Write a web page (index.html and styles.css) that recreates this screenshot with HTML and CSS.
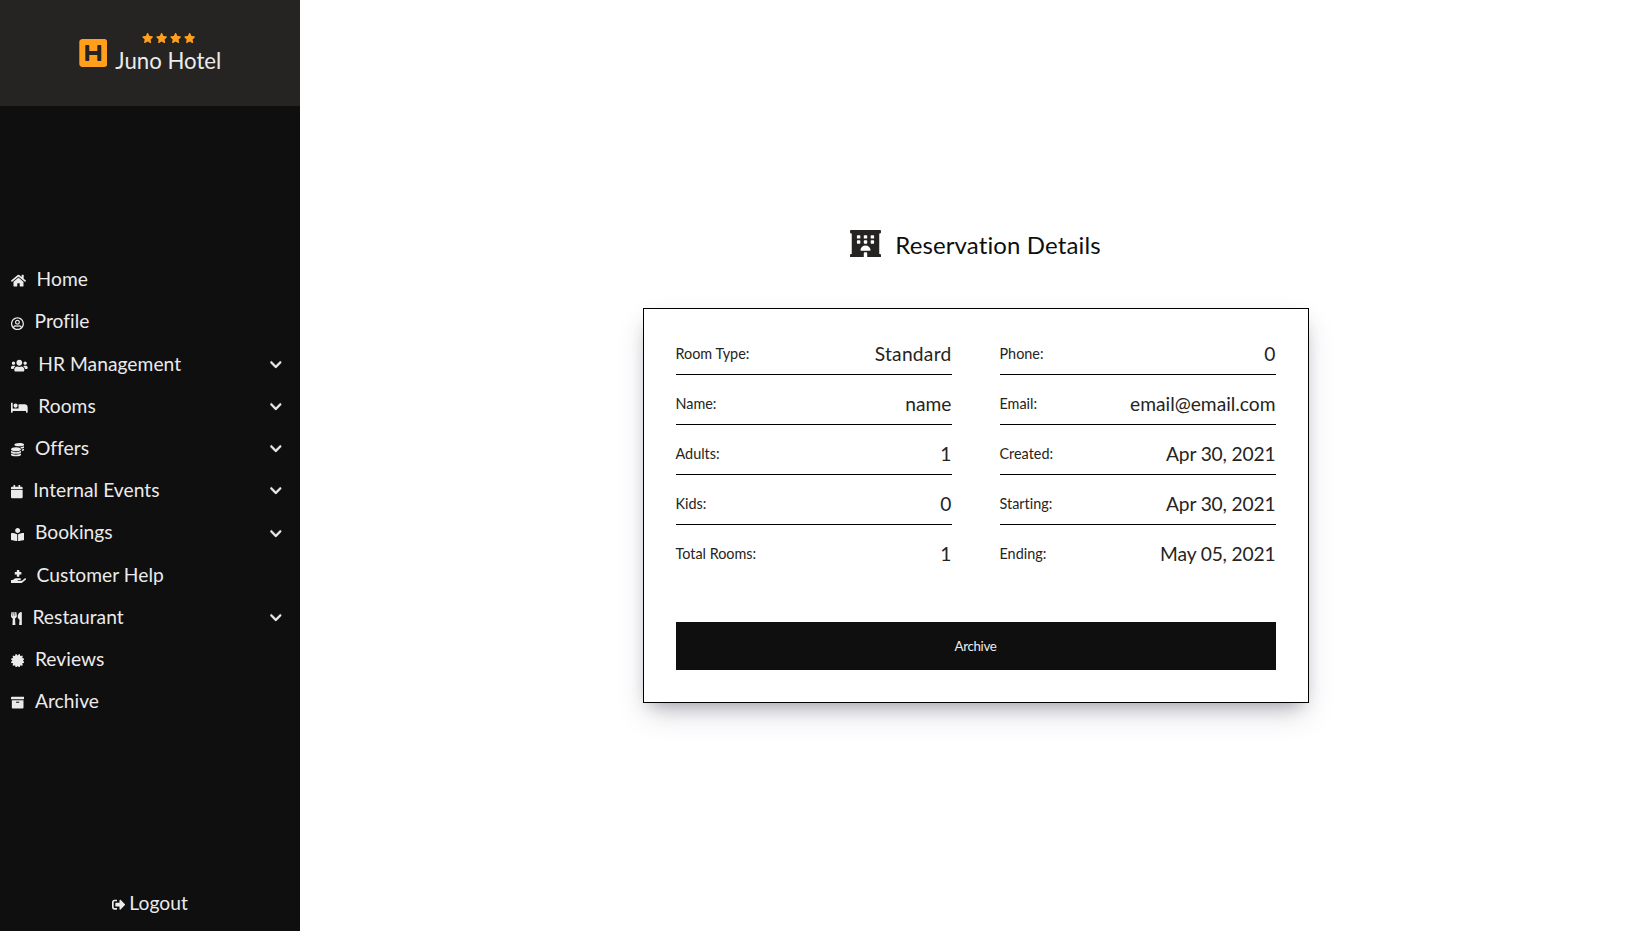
FILE: index.html
```html
<!DOCTYPE html>
<html lang="en">
<head>
<meta charset="utf-8">
<title>Juno Hotel</title>
<link rel="stylesheet" href="styles.css">
</head>
<body>
<svg class="sprite" aria-hidden="true">
  <symbol id="chevron" viewBox="0 0 448 512"><path d="M207.029 381.476L12.686 187.132c-9.373-9.373-9.373-24.569 0-33.941l22.667-22.667c9.357-9.357 24.522-9.375 33.901-.04L224 284.505l154.745-154.021c9.379-9.335 24.544-9.317 33.901.04l22.667 22.667c9.373 9.373 9.373 24.569 0 33.941L240.971 381.476c-9.373 9.372-24.569 9.372-33.942 0z"/></symbol>
  <symbol id="star" viewBox="0 0 576 512"><path d="M259.3 17.8L194 150.2 47.9 171.5c-26.2 3.8-36.7 36.1-17.7 54.6l105.7 103-25 145.5c-4.5 26.3 23.2 46 46.4 33.7L288 439.6l130.7 68.7c23.2 12.2 50.9-7.4 46.4-33.7l-25-145.5 105.7-103c19-18.5 8.5-50.8-17.7-54.6L382 150.2 316.7 17.8c-11.7-23.6-45.6-23.9-57.4 0z"/></symbol>
</svg>
<div class="layout">
  <aside class="sidebar">
    <header class="brand">
      <svg class="brand-mark" viewBox="0 0 448 512"><path d="M448 80v352c0 26.51-21.49 48-48 48H48c-26.51 0-48-21.49-48-48V80c0-26.51 21.49-48 48-48h352c26.51 0 48 21.49 48 48zm-112 48h-32c-8.837 0-16 7.163-16 16v80H160v-80c0-8.837-7.163-16-16-16h-32c-8.837 0-16 7.163-16 16v224c0 8.837 7.163 16 16 16h32c8.837 0 16-7.163 16-16v-80h128v80c0 8.837 7.163 16 16 16h32c8.837 0 16-7.163 16-16V144c0-8.837-7.163-16-16-16z"/></svg>
      <div class="brand-text">
        <div class="stars"><svg><use href="#star"/></svg><svg><use href="#star"/></svg><svg><use href="#star"/></svg><svg><use href="#star"/></svg></div>
        <div class="brand-name">Juno Hotel</div>
      </div>
    </header>
    <ul class="menu">
      <li><svg class="icon" viewBox="0 0 576 512"><path d="M280.37 148.26L96 300.11V464a16 16 0 0 0 16 16l112.06-.29a16 16 0 0 0 15.92-16V368a16 16 0 0 1 16-16h64a16 16 0 0 1 16 16v95.64a16 16 0 0 0 16 16.05L464 480a16 16 0 0 0 16-16V300L295.67 148.26a12.19 12.19 0 0 0-15.3 0zM571.6 251.47L488 182.56V44.05a12 12 0 0 0-12-12h-56a12 12 0 0 0-12 12v72.61L318.47 43a48 48 0 0 0-61 0L4.34 251.47a12 12 0 0 0-1.6 16.9l25.5 31A12 12 0 0 0 45.15 301l235.22-193.74a12.19 12.19 0 0 1 15.3 0L530.9 301a12 12 0 0 0 16.9-1.6l25.5-31a12 12 0 0 0-1.7-16.93z"/></svg><span>Home</span></li>
      <li><svg class="icon" viewBox="0 0 496 512"><path d="M248 104c-53 0-96 43-96 96s43 96 96 96 96-43 96-96-43-96-96-96zm0 144c-26.5 0-48-21.5-48-48s21.5-48 48-48 48 21.5 48 48-21.5 48-48 48zm0-240C111 8 0 119 0 256s111 248 248 248 248-111 248-248S385 8 248 8zm0 448c-49.7 0-95.1-18.3-130.1-48.4 14.9-23 40.4-38.6 69.6-39.5 20.8 6.4 40.6 9.6 60.5 9.6s39.7-3.1 60.5-9.6c29.2 1 54.7 16.5 69.6 39.5-35 30.1-80.4 48.4-130.1 48.4zm162.7-84.1c-24.4-31.4-62.1-51.9-105.1-51.9-10.2 0-26 9.6-57.6 9.6-31.5 0-47.4-9.6-57.6-9.6-42.9 0-80.6 20.5-105.1 51.9C61.9 339.2 48 299.2 48 256c0-110.3 89.7-200 200-200s200 89.7 200 200c0 43.2-13.9 83.2-37.3 115.9z"/></svg><span>Profile</span></li>
      <li><svg class="icon" viewBox="0 0 640 512"><path d="M96 224c35.3 0 64-28.7 64-64s-28.7-64-64-64-64 28.7-64 64 28.7 64 64 64zm448 0c35.3 0 64-28.7 64-64s-28.7-64-64-64-64 28.7-64 64 28.7 64 64 64zm32 32h-64c-17.6 0-33.5 7.1-45.1 18.6 40.3 22.1 68.9 62 75.1 109.4h66c17.7 0 32-14.3 32-32v-32c0-35.3-28.7-64-64-64zm-256 0c61.9 0 112-50.1 112-112S381.9 32 320 32 208 82.1 208 144s50.1 112 112 112zm76.8 32h-8.3c-20.8 10-43.9 16-68.5 16s-47.6-6-68.5-16h-8.3C179.6 288 128 339.6 128 403.2V432c0 26.5 21.5 48 48 48h288c26.5 0 48-21.5 48-48v-28.8c0-63.6-51.6-115.2-115.2-115.2zm-223.7-13.4C161.5 263.1 145.6 256 128 256H64c-35.3 0-64 28.7-64 64v32c0 17.7 14.3 32 32 32h65.9c6.3-47.4 34.9-87.3 75.2-109.4z"/></svg><span>HR Management</span><svg class="chevron"><use href="#chevron"/></svg></li>
      <li><svg class="icon" viewBox="0 0 640 512"><path d="M176 256c44.11 0 80-35.89 80-80s-35.89-80-80-80-80 35.89-80 80 35.89 80 80 80zm352-128H304c-8.84 0-16 7.16-16 16v144H64V80c0-8.84-7.16-16-16-16H16C7.16 64 0 71.16 0 80v352c0 8.84 7.16 16 16 16h32c8.84 0 16-7.16 16-16v-48h512v48c0 8.84 7.16 16 16 16h32c8.84 0 16-7.16 16-16V240c0-61.86-50.14-112-112-112z"/></svg><span>Rooms</span><svg class="chevron"><use href="#chevron"/></svg></li>
      <li><svg class="icon" viewBox="0 0 512 512"><path d="M0 405.3V448c0 35.3 86 64 192 64s192-28.7 192-64v-42.7C342.7 434.4 267.2 448 192 448S41.3 434.4 0 405.3zM320 128c106 0 192-28.7 192-64S426 0 320 0 128 28.7 128 64s86 64 192 64zM0 300.4V352c0 35.3 86 64 192 64s192-28.7 192-64v-51.6c-41.3 34-116.9 51.6-192 51.6S41.3 334.4 0 300.4zm416 11c57.3-11.1 96-31.7 96-55.4v-42.7c-23.2 16.4-57.3 27.6-96 34.5v63.6zM192 160C86 160 0 195.8 0 240s86 80 192 80 192-35.8 192-80-86-80-192-80zm219.3 56.3c60-10.8 100.7-32 100.7-56.3v-42.7c-35.5 25.1-96.5 38.6-160.7 41.8 29.5 14.3 51.2 33.5 60 57.2z"/></svg><span>Offers</span><svg class="chevron"><use href="#chevron"/></svg></li>
      <li><svg class="icon" viewBox="0 0 448 512"><path d="M12 192h424c6.6 0 12 5.4 12 12v260c0 26.5-21.5 48-48 48H48c-26.5 0-48-21.5-48-48V204c0-6.6 5.4-12 12-12zm436-44v-36c0-26.5-21.5-48-48-48h-48V12c0-6.6-5.4-12-12-12h-40c-6.6 0-12 5.4-12 12v52H160V12c0-6.6-5.4-12-12-12h-40c-6.6 0-12 5.4-12 12v52H48C21.5 64 0 85.5 0 112v36c0 6.6 5.4 12 12 12h424c6.6 0 12-5.4 12-12z"/></svg><span>Internal Events</span><svg class="chevron"><use href="#chevron"/></svg></li>
      <li><svg class="icon" viewBox="0 0 512 512"><path d="M352 96c0-53.02-42.98-96-96-96s-96 42.98-96 96 42.98 96 96 96 96-42.98 96-96zM233.59 241.1c-59.33-36.32-155.43-46.3-203.79-49.05C13.55 191.13 0 203.51 0 219.14v222.8c0 14.33 11.59 26.28 26.49 27.05 43.66 2.29 131.99 10.68 193.04 41.43 9.37 4.72 20.48-1.71 20.48-11.87V252.56c-.01-4.67-2.32-8.95-6.42-11.46zm248.61-49.05c-48.35 2.74-144.46 12.73-203.78 49.05-4.1 2.51-6.41 6.96-6.41 11.63v245.79c0 10.19 11.14 16.63 20.54 11.9 61.04-30.72 149.32-39.11 192.97-41.4 14.9-.78 26.49-12.73 26.49-27.06V219.14c-.01-15.63-13.56-28.01-29.81-27.09z"/></svg><span>Bookings</span><svg class="chevron"><use href="#chevron"/></svg></li>
      <li><svg class="icon" viewBox="0 0 576 512"><path d="M160 176h64v64a16 16 0 0 0 16 16h64a16 16 0 0 0 16-16v-64h64a16 16 0 0 0 16-16V96a16 16 0 0 0-16-16h-64V16a16 16 0 0 0-16-16h-64a16 16 0 0 0-16 16v64h-64a16 16 0 0 0-16 16v64a16 16 0 0 0 16 16zM565.3 328.1c-11.8-10.7-30.2-10-42.6 0L430.3 402c-11.3 9.1-25.4 14-40 14H272c-8.8 0-16-7.2-16-16s7.2-16 16-16h78.3c15.9 0 30.7-10.9 33.3-26.6 3.3-20-12.1-37.4-31.6-37.4H192c-27 0-53.1 9.3-74.1 26.3L71.4 384H16c-8.8 0-16 7.2-16 16v96c0 8.8 7.2 16 16 16h356.8c14.5 0 28.6-4.9 40-14L564 377c15.2-12.1 16.4-35.3 1.3-48.9z"/></svg><span>Customer Help</span></li>
      <li><svg class="icon" viewBox="0 0 416 512"><path d="M207.9 15.2c.8 4.7 16.1 94.5 16.1 128.8 0 52.3-27.8 89.6-68.9 104.6L168 486.7c.7 13.7-10.2 25.3-24 25.3H80c-13.7 0-24.7-11.5-24-25.3l12.9-238.1C27.7 233.6 0 196.2 0 144 0 109.6 15.3 19.9 16.1 15.2 19.3-5.1 61.4-5.4 64 16.3v141.2c1.3 3.4 15.1 3.2 16 0 1.4-25.3 7.9-139.2 8-141.8 3.3-20.8 44.7-20.8 47.9 0 .2 2.7 6.6 116.5 8 141.8.9 3.2 14.8 3.4 16 0V16.3c2.6-21.6 44.8-21.4 48-1.1zm119.2 285.7l-15 185.1c-1.2 14 9.9 26 23.9 26h56c13.3 0 24-10.7 24-24V24c0-13.2-10.7-24-24-24-82.5 0-221.4 178.5-64.9 300.9z"/></svg><span>Restaurant</span><svg class="chevron"><use href="#chevron"/></svg></li>
      <li><svg class="icon" viewBox="0 0 512 512"><path d="M458.622 255.92l45.985-45.005c13.708-12.977 7.316-36.039-10.664-40.339l-62.65-15.99 17.661-62.015c4.991-17.838-11.829-34.663-29.661-29.671l-61.994 17.667-15.984-62.671C337.085.197 313.765-6.276 300.99 7.228L256 53.57 211.011 7.229c-12.63-13.351-36.047-7.234-40.325 10.668l-15.984 62.671-61.995-17.667C74.87 57.907 58.056 74.738 63.046 92.572l17.661 62.015-62.65 15.99C.069 174.878-6.31 197.944 7.392 210.915l45.985 45.005-45.985 45.004c-13.708 12.977-7.316 36.039 10.664 40.339l62.65 15.99-17.661 62.015c-4.991 17.838 11.829 34.663 29.661 29.671l61.994-17.667 15.984 62.671c4.439 18.575 27.696 24.018 40.325 10.668L256 458.61l44.989 46.001c12.5 13.488 35.987 7.486 40.325-10.668l15.984-62.671 61.994 17.667c17.836 4.994 34.651-11.837 29.661-29.671l-17.661-62.015 62.65-15.99c17.987-4.302 24.366-27.367 10.664-40.339l-45.984-45.004z"/></svg><span>Reviews</span></li>
      <li><svg class="icon" viewBox="0 0 512 512"><path d="M32 448c0 17.7 14.3 32 32 32h384c17.7 0 32-14.3 32-32V160H32v288zm160-212c0-6.6 5.4-12 12-12h104c6.6 0 12 5.4 12 12v8c0 6.6-5.4 12-12 12H204c-6.6 0-12-5.4-12-12v-8zM480 32H32C14.3 32 0 46.3 0 64v48c0 8.8 7.2 16 16 16h480c8.8 0 16-7.2 16-16V64c0-17.7-14.3-32-32-32z"/></svg><span>Archive</span></li>
    </ul>
    <div class="logout"><svg class="icon" viewBox="0 0 512 512"><path d="M497 273L329 441c-15 15-41 4.5-41-17v-96H152c-13.3 0-24-10.7-24-24v-96c0-13.3 10.7-24 24-24h136V88c0-21.4 25.9-32 41-17l168 168c9.3 9.4 9.3 24.6 0 34zM192 436v-40c0-6.6-5.4-12-12-12H96c-17.7 0-32-14.3-32-32V160c0-17.7 14.3-32 32-32h84c6.6 0 12-5.4 12-12V76c0-6.6-5.4-12-12-12H96c-53 0-96 43-96 96v192c0 53 43 96 96 96h84c6.6 0 12-5.4 12-12z"/></svg><span>Logout</span></div>
  </aside>
  <main class="content">
    <h1 class="title">
      <svg class="title-icon" viewBox="0 0 576 512"><path fill-rule="evenodd" d="M560 64c8.84 0 16-7.16 16-16V16c0-8.84-7.16-16-16-16H16C7.16 0 0 7.16 0 16v32c0 8.84 7.16 16 16 16h16v384H16c-8.84 0-16 7.16-16 16v32c0 8.84 7.16 16 16 16h240v-80c0-8.8 7.2-16 16-16h32c8.8 0 16 7.2 16 16v80h240c8.84 0 16-7.16 16-16v-32c0-8.84-7.16-16-16-16h-16V64zM141 96h38q13 0 13 13v38q0 13-13 13h-38q-13 0-13-13v-38q0-13 13-13zM269 96h38q13 0 13 13v38q0 13-13 13h-38q-13 0-13-13v-38q0-13 13-13zM397 96h38q13 0 13 13v38q0 13-13 13h-38q-13 0-13-13v-38q0-13 13-13zM141 192h38q13 0 13 13v38q0 13-13 13h-38q-13 0-13-13v-38q0-13 13-13zM269 192h38q13 0 13 13v38q0 13-13 13h-38q-13 0-13-13v-38q0-13 13-13zM397 192h38q13 0 13 13v38q0 13-13 13h-38q-13 0-13-13v-38q0-13 13-13zM208 384c-8.800 0-16.200-7.300-14.400-16 9.900-46 44.300-80 94.400-80s84.500 34 94.400 80c1.900 8.700-5.600 16-14.400 16z"/></svg>
      <span>Reservation Details</span>
    </h1>
    <section class="card">
      <div class="details">
        <dl class="column">
          <div class="row"><dt>Room Type:</dt><dd class="word">Standard</dd></div>
          <div class="row"><dt>Name:</dt><dd>name</dd></div>
          <div class="row"><dt>Adults:</dt><dd>1</dd></div>
          <div class="row"><dt>Kids:</dt><dd>0</dd></div>
          <div class="row"><dt>Total Rooms:</dt><dd>1</dd></div>
        </dl>
        <dl class="column">
          <div class="row"><dt>Phone:</dt><dd>0</dd></div>
          <div class="row"><dt>Email:</dt><dd>email@email.com</dd></div>
          <div class="row"><dt>Created:</dt><dd class="date">Apr 30, 2021</dd></div>
          <div class="row"><dt>Starting:</dt><dd class="date">Apr 30, 2021</dd></div>
          <div class="row"><dt>Ending:</dt><dd class="date">May 05, 2021</dd></div>
        </dl>
      </div>
      <button class="archive" type="button">Archive</button>
    </section>
  </main>
</div>
</body>
</html>
```
FILE: styles.css
```css
* { box-sizing: border-box; margin: 0; padding: 0; }
body { font-family: Lato, sans-serif; background: #fff; color: #252422; }
svg { fill: currentColor; flex: none; }
.sprite { display: none; }
.layout { display: flex; height: 931px; }

.sidebar { width: 300px; display: flex; flex-direction: column; background: #0f0f0f; color: #ebebeb; font-size: 19.2px; }
.brand { height: 106px; display: flex; align-items: center; justify-content: center; gap: 8px; background: #252422; }
.brand-mark { width: 28.6px; height: 32px; color: #ff9f1c; }
.brand-text { display: flex; flex-direction: column; align-items: center; }
.stars { display: flex; gap: 2.75px; padding-left: 1px; color: #ff9f1c; }
.stars svg { width: 11.25px; height: 10px; }
.brand-name { font-size: 22.2px; line-height: 27px; padding-top: 4px; }

.menu { list-style: none; flex: 1; padding-top: 152px; }
.menu li { height: 42.2px; display: flex; align-items: center; padding: 0 18px 0 11px; line-height: 24px; }
.icon { height: 13.33px; margin-top: 4px; }
.menu span { margin: .2px 0 0 10.6px; letter-spacing: .05px; font-variant-ligatures: common-ligatures; }
.chevron { width: 11.67px; height: 13.33px; margin-left: auto; margin-top: 2px; stroke: currentColor; stroke-width: 14px; }
.logout { display: flex; align-items: center; justify-content: center; gap: 4px; height: 24px; margin-bottom: 16px; }
.logout span { margin-top: -1px; letter-spacing: .1px; }

.content { flex: 1; display: flex; flex-direction: column; align-items: center; padding-top: 229px; }
.title { display: flex; align-items: center; gap: 14px; height: 31px; font-size: 24px; font-weight: 400; color: #0f0f0f; font-variant-ligatures: none; letter-spacing: .12px; }
.title-icon { width: 31px; height: 27.5px; margin-top: -2px; color: #252422; }
.card { width: 666px; margin-top: 48px; padding: 32px; border: 1px solid #000; background: #fff; font-variant-ligatures: none; box-shadow: rgba(50, 50, 93, .25) 0 13px 27px -5px, rgba(0, 0, 0, .3) 0 8px 16px -8px; }
.details { display: grid; grid-template-columns: 1fr 1fr; column-gap: 48px; }
.column { display: flex; flex-direction: column; gap: 16px; }
.row { display: flex; justify-content: space-between; align-items: center; height: 34px; padding-bottom: 8px; border-bottom: 1px solid #000; }
.row:last-child { height: 33px; border-bottom: 0; }
.row dt { font-size: 14.4px; }
.row dd { font-size: 19.2px; line-height: 24px; margin-top: 1px; }
.row .word { letter-spacing: .25px; }
.row .date { letter-spacing: -.15px; }
.archive { display: block; width: 100%; height: 48px; margin-top: 48px; border: 0; background: #0f0f0f; color: #ebebeb; font-family: Lato, sans-serif; font-size: 13.33px; letter-spacing: -.35px; }
```
